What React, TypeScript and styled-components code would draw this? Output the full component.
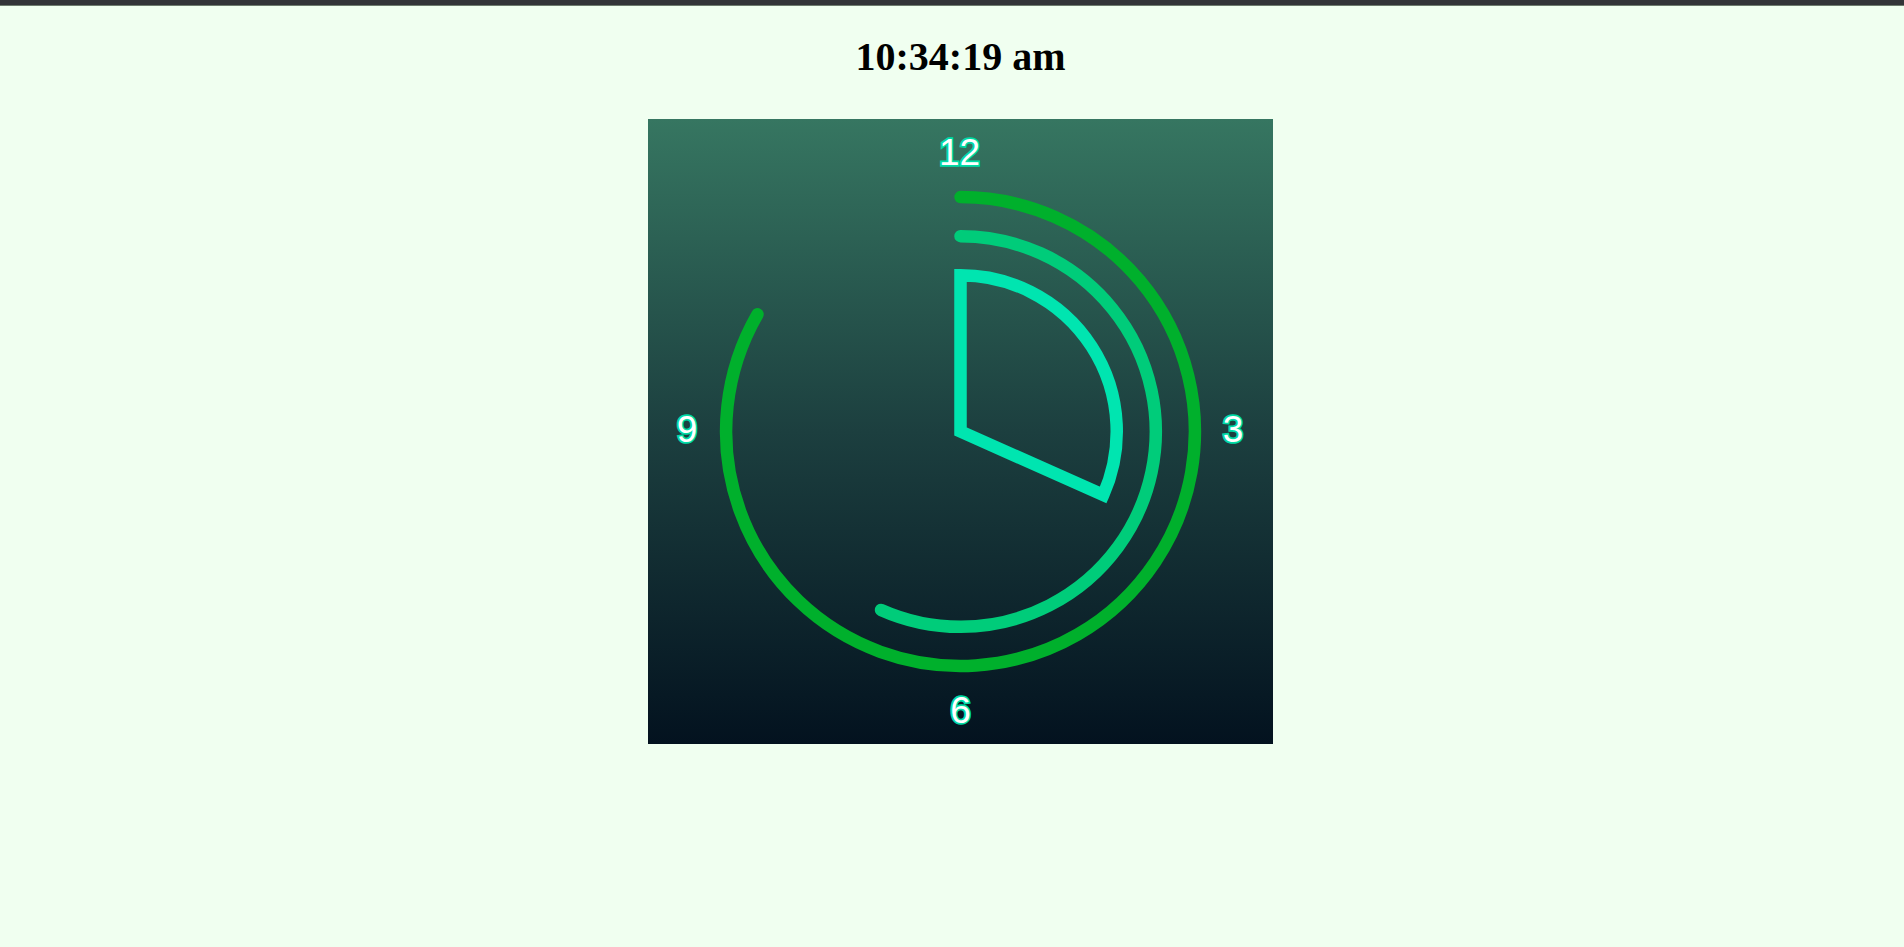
import React from "react";
import styled, { createGlobalStyle } from "styled-components";

const GlobalStyle = createGlobalStyle`
  html, body { margin: 0; padding: 0; }
  body {
    background: #f0fff0;
    font-family: "Liberation Serif", "Times New Roman", serif;
  }
`;

const TopBar = styled.div`
  height: 5px;
  background: #333438;
  border-bottom: 1px solid #6d7b6d;
`;

const Page = styled.main`
  display: flex;
  flex-direction: column;
  align-items: center;
  padding-left: 17px;
`;

const Title = styled.h1`
  margin: 28px 0 39px;
  font-family: "Liberation Serif", "Times New Roman", serif;
  font-weight: bold;
  font-size: 40px;
  line-height: 46px;
  color: #000;
`;

const ClockFace = styled.svg`
  display: block;
  width: 625px;
  height: 625px;
`;

const Numeral = styled.text`
  font-family: "Liberation Sans", Arial, sans-serif;
  font-size: 37px;
  fill: #ffffff;
  stroke: #00dba6;
  stroke-width: 3.5px;
  paint-order: stroke;
  text-anchor: middle;
`;

const SIZE = 625;
const C = SIZE / 2;
const STROKE = 12.5;

function pt(r: number, deg: number) {
  const a = (deg * Math.PI) / 180;
  return [C + r * Math.sin(a), C - r * Math.cos(a)];
}

function arcPath(r: number, deg: number) {
  const [x, y] = pt(r, deg);
  const large = deg > 180 ? 1 : 0;
  return `M ${C} ${C - r} A ${r} ${r} 0 ${large} 1 ${x} ${y}`;
}

function sectorPath(r: number, deg: number) {
  const [x, y] = pt(r, deg);
  const large = deg > 180 ? 1 : 0;
  return `M ${C} ${C} L ${C} ${C - r} A ${r} ${r} 0 ${large} 1 ${x} ${y} Z`;
}

const hours = 10;
const minutes = 34;
const seconds = 19;

export default function App() {
  const hourDeg = (hours % 12) * 30;
  const minDeg = minutes * 6;
  const secDeg = seconds * 6;
  const off = 12.6;
  return (
    <>
      <GlobalStyle />
      <TopBar />
      <Page>
        <Title>10:34:19 am</Title>
        <ClockFace viewBox={`0 0 ${SIZE} ${SIZE}`}>
          <defs>
            <linearGradient id="bg" x1="0" y1="0" x2="0" y2="1">
              <stop offset="0" stopColor="#367661" />
              <stop offset="0.5" stopColor="#1c3f3f" />
              <stop offset="1" stopColor="#03121f" />
            </linearGradient>
          </defs>
          <rect x="0" y="0" width={SIZE} height={SIZE} fill="url(#bg)" />
          <path d={arcPath(234.4, hourDeg)} fill="none" stroke="#00b02c" strokeWidth={STROKE} strokeLinecap="round" />
          <path d={arcPath(195.3, minDeg)} fill="none" stroke="#00cc7a" strokeWidth={STROKE} strokeLinecap="round" />
          <path d={sectorPath(156.25, secDeg)} fill="none" stroke="#00e5b0" strokeWidth={STROKE} strokeLinejoin="miter" strokeMiterlimit={10} />
          <Numeral x={C - 1} y={C - 279.5 + off}>12</Numeral>
          <Numeral x={C + 272.5} y={C - 2 + off}>3</Numeral>
          <Numeral x={C} y={C + 279 + off}>6</Numeral>
          <Numeral x={C - 273.5} y={C - 2 + off}>9</Numeral>
        </ClockFace>
      </Page>
    </>
  );
}
